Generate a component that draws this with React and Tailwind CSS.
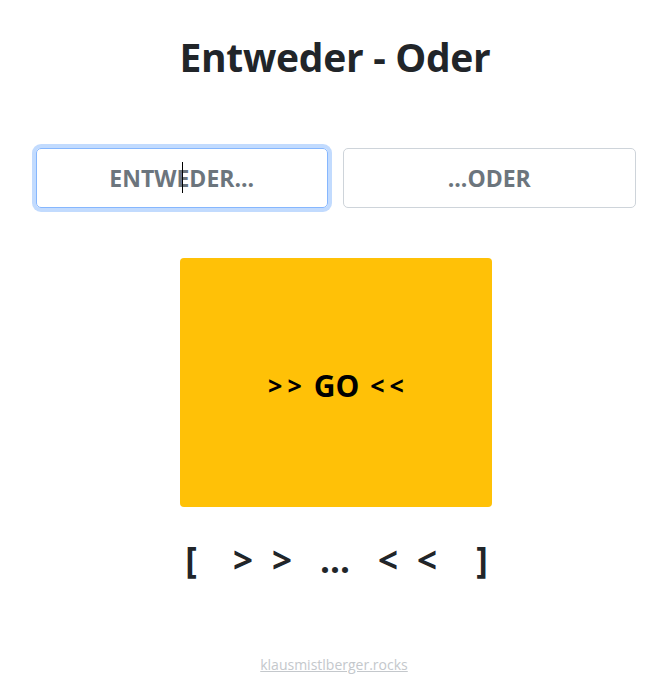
export default function App() {
  const font = { fontFamily: '"Open Sans", "Noto Sans", sans-serif' }
  return (
    <div className="min-h-[692px] bg-white text-[#212529] flex flex-col items-center" style={font}>
      <h1 className="mt-[30px] ml-[2px] text-[39px] leading-[54px] font-bold tracking-[-0.3px]">Entweder - Oder</h1>

      <div className="mt-[64px] flex gap-[15px] w-[600px] ml-[4px]">
        <div className="relative flex-1">
          <input
            placeholder="ENTWEDER..."
            className="w-full h-[60px] rounded-[5px] border border-[#86b7fe] shadow-[0_0_0_4px_rgba(13,110,253,0.25)] text-center text-[23px] font-bold outline-none placeholder:text-[#6c757d]"
          />
          <span className="absolute left-1/2 top-[14px] w-px h-[31px] bg-black" />
        </div>
        <input
          placeholder="...ODER"
          className="flex-1 w-full h-[60px] rounded-[5px] border border-[#ced4da] text-center text-[23px] font-bold outline-none placeholder:text-[#6c757d]"
        />
      </div>

      <button className="mt-[50px] ml-[4px] pt-[6px] w-[312px] h-[249px] rounded-[4px] bg-[#ffc107] text-black font-bold flex items-center justify-center">
        <span className="text-[25px] tracking-[5px]">&gt;&gt;</span>
        <span className="ml-[7px] mr-[11px] text-[30px]">GO</span>
        <span className="text-[25px] tracking-[5px] mr-[-5px]">&lt;&lt;</span>
      </button>

      <div className="mt-[30px] ml-[5px] flex items-center text-[35px] font-bold leading-[46px]">
        <span className="w-[30px] text-center">[</span>
        <span className="ml-[22px] w-[30px] text-center">&gt;</span>
        <span className="ml-[9px] w-[30px] text-center">&gt;</span>
        <span className="ml-[23px] w-[30px] text-center">...</span>
        <span className="ml-[23px] w-[30px] text-center">&lt;</span>
        <span className="ml-[9px] w-[30px] text-center">&lt;</span>
        <span className="ml-[25px] w-[30px] text-center">]</span>
      </div>

      <a href="#" className="mt-[71px] text-[14px] text-[#c4c8cc] underline">klausmistlberger.rocks</a>
    </div>
  )
}
